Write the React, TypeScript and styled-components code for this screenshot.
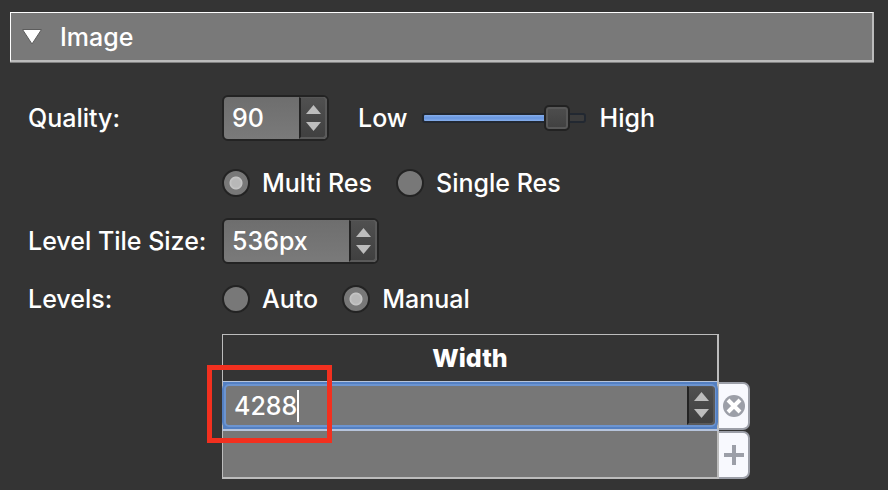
import React, { useState } from "react";
import styled, { createGlobalStyle, css } from "styled-components";

const GlobalStyle = createGlobalStyle`
  *, *::before, *::after { box-sizing: border-box; }
  body {
    margin: 0;
    background: #343434;
    color: #fff;
    font-family: Inter, "Liberation Sans", sans-serif;
    font-size: 25px;
    font-weight: 500;
    line-height: 34px;
  }
  button, input { font: inherit; color: inherit; }
`;

const Page = styled.main`
  padding: 12px 14px 11px 10px;
`;

const SectionHeader = styled.button`
  display: flex;
  align-items: center;
  gap: 18px;
  width: 100%;
  height: 50px;
  padding: 1px 11px 0;
  background: #797979;
  border: solid;
  border-width: 1px 2px 2px 1px;
  border-color: #fff #bbb #bbb #fff;
  box-shadow: 0 1px 0 #808080;
  text-align: left;
`;

const Form = styled.form`
  display: grid;
  gap: 18px;
  padding: 33px 0 0 18px;
`;

const Row = styled.div<{ $offset?: boolean }>`
  display: grid;
  grid-template-columns: 194px 1fr;
  align-items: center;
  padding-top: ${(p) => (p.$offset ? "7px" : "0")};
`;

const Controls = styled.div`
  grid-column: 2;
  display: flex;
  align-items: center;
`;

const RadioGroup = styled(Controls)`
  gap: 24px;
`;

const Stepper = styled.div`
  display: flex;
  flex-direction: column;
  width: 28px;
  background: linear-gradient(#505050, #404040);
  border: solid;
  border-width: 1px 2px 2px;
  border-color: #565656 #5a5a5a #5a5a5a #232323;
  border-radius: 0 4px 4px 0;
`;

const SpinFrame = styled.div<{ $size: "small" | "medium" | "fill" }>`
  display: flex;
  overflow: hidden;
  height: 46px;
  background: linear-gradient(#6e6e6e, #7a7a7a);
  border: 2px solid #232323;
  border-radius: 6px;
  width: ${(p) => (p.$size === "small" ? "107px" : p.$size === "medium" ? "157px" : "auto")};
  ${(p) =>
    p.$size === "fill" &&
    css`
      height: 45px;
      background: #777;
      border: 3px solid #6c94d0;
      border-right-width: 2px;
      outline: 2px solid #5480c2;
      outline-offset: -1px;
      margin: 1px 0;
    `}
`;

const SpinInput = styled.input`
  flex: 1;
  min-width: 0;
  padding: 0 0 0 8px;
  background: none;
  border: 0;
  outline: 0;
`;

const CellInput = styled(SpinInput)`
  flex: none;
  field-sizing: content;
  caret-color: transparent;
`;

const Caret = styled.span`
  align-self: center;
  width: 2px;
  height: 32px;
  margin-right: auto;
  background: #fff;
`;

const Step = styled.button<{ $dir: "up" | "down" }>`
  display: flex;
  flex: 1;
  min-height: 0;
  justify-content: center;
  align-items: ${(p) => (p.$dir === "up" ? "flex-end" : "flex-start")};
  padding: 4px 0;
  background: none;
  border: 0;
`;

const RadioLabel = styled.label`
  display: flex;
  align-items: center;
  gap: 12px;
`;

const RadioInput = styled.input`
  appearance: none;
  width: 28px;
  height: 28px;
  margin: 0;
  border: 2px solid #232323;
  border-radius: 50%;
  background: #787878;
  &:checked {
    background: radial-gradient(circle, #b8b8b8 4px, #c6c6c6 6px, #787878 7px);
  }
`;

const SliderText = styled.span`
  &:first-of-type { margin-left: 29px; }
`;

const Slider = styled.input`
  appearance: none;
  width: 164px;
  height: 28px;
  margin: 0 14px;
  background: none;
  &::-webkit-slider-runnable-track {
    height: 10px;
    border: 2px solid #222831;
    border-radius: 3px;
    background: linear-gradient(90deg, transparent 85%, #3c3c3c 85%),
      linear-gradient(#86aeeb, #6795df 50%, #86aeeb);
  }
  &::-webkit-slider-thumb {
    appearance: none;
    width: 26px;
    height: 26px;
    margin-top: -10px;
    border: 2px solid #222;
    border-radius: 5px;
    background: linear-gradient(#4e4e4e, #404040);
    box-shadow: inset 0 0 0 2px #585858;
  }
`;

const LevelTable = styled.table`
  grid-column: 2;
  width: 100%;
  max-width: 528px;
  border-collapse: separate;
  border-spacing: 0;
`;

const HeadCell = styled.th`
  height: 47px;
  padding: 0;
  border: solid #bcbcbc;
  border-width: 1px 2px 0 1px;
  font-weight: 800;
`;

const ValueCell = styled.td<{ $active?: boolean }>`
  position: relative;
  padding: 0;
  background: ${(p) => (p.$active ? "#5480c2" : "#777")};
  border: solid #bcbcbc;
  border-width: 0 2px 2px 1px;
  border-bottom-color: ${(p) => (p.$active ? "#b6c4dc" : "#bcbcbc")};
  ${(p) => p.$active && css`border-top: 1px solid #b6c4dc;`}
`;

const EmptyInput = styled(SpinInput)`
  display: block;
  width: 100%;
  height: 46px;
`;

const ActionCell = styled.td`
  width: 31px;
  padding: 0;
`;

const ActionButton = styled.button`
  display: flex;
  align-items: center;
  justify-content: center;
  width: 100%;
  height: 48px;
  padding: 0;
  background: #f8f9fe;
  border: 2px solid #9c9fa8;
  border-left-width: 0;
  border-radius: 0 7px 7px 0;
`;

const Highlight = styled.div`
  position: absolute;
  z-index: 1;
  inset: -17px auto -14px -16px;
  width: 125px;
  border: 5px solid #f2301f;
  pointer-events: none;
`;

function Arrow({ dir }: { dir: "up" | "down" }) {
  return (
    <svg width="15" height="9" viewBox="0 0 15 9" aria-hidden="true">
      <path d={dir === "up" ? "M7.5 0 15 9H0z" : "M0 0h15L7.5 9z"} fill="#bdbdbd" />
    </svg>
  );
}

function StepButtons({ onStep }: { onStep: (delta: number) => void }) {
  return (
    <Stepper>
      <Step type="button" $dir="up" aria-label="Increase" onClick={() => onStep(1)}>
        <Arrow dir="up" />
      </Step>
      <Step type="button" $dir="down" aria-label="Decrease" onClick={() => onStep(-1)}>
        <Arrow dir="down" />
      </Step>
    </Stepper>
  );
}

function Radio({ name, label, checked }: { name: string; label: string; checked?: boolean }) {
  return (
    <RadioLabel>
      <RadioInput type="radio" name={name} defaultChecked={checked} />
      {label}
    </RadioLabel>
  );
}

export default function App() {
  const [open, setOpen] = useState(true);
  const [quality, setQuality] = useState(90);
  const [tile, setTile] = useState("536px");
  const [level, setLevel] = useState("4288");

  return (
    <>
      <GlobalStyle />
      <Page>
        <SectionHeader type="button" aria-expanded={open} onClick={() => setOpen(!open)}>
          <svg width="20" height="16" viewBox="0 0 20 16" aria-hidden="true">
            <path d="M0.5 0.5h19L10 15z" fill="#fff" stroke="#5c5c5c" />
          </svg>
          Image
        </SectionHeader>
        {open && (
          <Form>
            <Row>
              <label htmlFor="quality">Quality:</label>
              <Controls>
                <SpinFrame $size="small">
                  <SpinInput
                    id="quality"
                    value={quality}
                    onChange={(e) => setQuality(Number(e.target.value) || 0)}
                  />
                  <StepButtons onStep={(d) => setQuality(quality + d)} />
                </SpinFrame>
                <SliderText>Low</SliderText>
                <Slider
                  type="range"
                  aria-label="Quality"
                  min={0}
                  max={100}
                  value={quality}
                  onChange={(e) => setQuality(Number(e.target.value))}
                />
                <SliderText>High</SliderText>
              </Controls>
            </Row>
            <Row $offset>
              <RadioGroup role="radiogroup" aria-label="Resolution">
                <Radio name="resolution" label="Multi Res" checked />
                <Radio name="resolution" label="Single Res" />
              </RadioGroup>
            </Row>
            <Row>
              <label htmlFor="tile">Level Tile Size:</label>
              <Controls>
                <SpinFrame $size="medium">
                  <SpinInput id="tile" value={tile} onChange={(e) => setTile(e.target.value)} />
                  <StepButtons onStep={(d) => setTile(`${parseInt(tile, 10) + d}px`)} />
                </SpinFrame>
              </Controls>
            </Row>
            <Row>
              <span id="levels">Levels:</span>
              <RadioGroup role="radiogroup" aria-labelledby="levels">
                <Radio name="levels" label="Auto" />
                <Radio name="levels" label="Manual" checked />
              </RadioGroup>
            </Row>
            <Row>
              <LevelTable>
                <thead>
                  <tr>
                    <HeadCell scope="col">Width</HeadCell>
                    <ActionCell />
                  </tr>
                </thead>
                <tbody>
                  <tr>
                    <ValueCell $active>
                      <SpinFrame $size="fill">
                        <CellInput
                          aria-label="Width"
                          value={level}
                          onChange={(e) => setLevel(e.target.value)}
                        />
                        <Caret />
                        <StepButtons onStep={(d) => setLevel(String(Number(level) + d))} />
                      </SpinFrame>
                      <Highlight />
                    </ValueCell>
                    <ActionCell>
                      <ActionButton type="button" aria-label="Remove level">
                        <svg width="24" height="24" viewBox="0 0 24 24" aria-hidden="true">
                          <circle cx="12" cy="12" r="11" fill="#9c9fa8" />
                          <path d="M6 6l12 12M18 6L6 18" stroke="#fff" strokeWidth="4" />
                        </svg>
                      </ActionButton>
                    </ActionCell>
                  </tr>
                  <tr>
                    <ValueCell>
                      <EmptyInput aria-label="New width" />
                    </ValueCell>
                    <ActionCell>
                      <ActionButton type="button" aria-label="Add level">
                        <svg width="20" height="20" viewBox="0 0 20 20" aria-hidden="true">
                          <path d="M10 0v20M0 10h20" stroke="#9c9fa8" strokeWidth="4" />
                        </svg>
                      </ActionButton>
                    </ActionCell>
                  </tr>
                </tbody>
              </LevelTable>
            </Row>
          </Form>
        )}
      </Page>
    </>
  );
}
